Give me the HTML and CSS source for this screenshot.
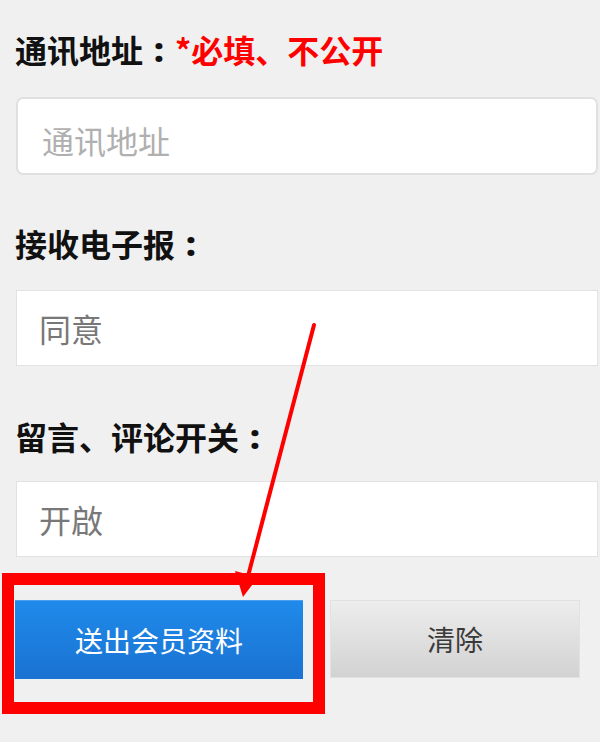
FILE: index.html
```html
<!DOCTYPE html>
<html lang="zh">
<head>
<meta charset="utf-8">
<title>会员资料</title>
<link rel="stylesheet" href="styles.css">
</head>
<body>
<div class="page">
  <form class="form">
    <div class="label label-first">通讯地址<span class="colon">:</span><span class="req">*必填、不公开</span></div>
    <input class="field field-round" type="text" placeholder="通讯地址">
    <div class="label label-second">接收电子报<span class="colon">:</span></div>
    <input class="field" type="text" value="同意">
    <div class="label label-third">留言、评论开关<span class="colon">:</span></div>
    <input class="field" type="text" value="开啟">
    <div class="actions">
      <button class="btn btn-primary" type="button">送出会员资料</button>
      <button class="btn btn-secondary" type="reset">清除</button>
    </div>
  </form>
  <div class="highlight"></div>
  <svg class="arrow" width="600" height="742" viewBox="0 0 600 742" aria-hidden="true">
    <line x1="314" y1="325" x2="247" y2="580" stroke="#ff0000" stroke-width="4" stroke-linecap="round"/>
    <polygon points="235,571 258,577 243,597" fill="#ff0000"/>
  </svg>
</div>
</body>
</html>
```

FILE: styles.css
```css
html, body {
  margin: 0;
  padding: 0;
  background: #f0f0f0;
}

.page {
  position: relative;
  width: 600px;
  height: 742px;
  overflow: hidden;
  font-family: "Noto Sans CJK SC", "Noto Sans", sans-serif;
}

.form {
  display: flex;
  flex-direction: column;
  padding: 25px 3px 0 15px;
}

.label {
  font-size: 32px;
  line-height: 48px;
  height: 48px;
  font-weight: 700;
  color: #111111;
  white-space: nowrap;
}

.colon {
  display: inline-block;
  width: 32px;
  text-align: center;
  font-family: "Noto Sans", "Liberation Sans", sans-serif;
  font-size: 34px;
  font-weight: 900;
  vertical-align: top;
}

.label-first { margin-bottom: 24px; }
.label-second { margin-top: 44px; margin-bottom: 23px; }
.label-third { margin-top: 46px; margin-bottom: 21px; }

.req {
  color: #ff0000;
  font-weight: 700;
}

.field {
  box-sizing: border-box;
  display: block;
  width: 582px;
  margin: 0 0 0 1px;
  height: 76px;
  padding: 0 22px;
  border: 1px solid #e2e2e2;
  background: #ffffff;
  font-family: "Noto Sans CJK SC", "Noto Sans", sans-serif;
  font-size: 32px;
  color: #787878;
  outline: none;
}

.field-round {
  height: 78px;
  border: 2px solid #e0e0e0;
  border-radius: 7px;
  padding-left: 24px;
  padding-top: 8px;
}

.field-round::placeholder {
  color: #b0b0b0;
}

.actions {
  display: flex;
  align-items: flex-start;
  gap: 27px;
  margin-top: 43px;
}

.btn {
  box-sizing: border-box;
  font-family: "Noto Sans CJK SC", "Noto Sans", sans-serif;
  font-size: 28px;
  padding: 0;
  cursor: pointer;
}

.btn-primary {
  width: 288px;
  height: 79px;
  border: none;
  border-top: 1px solid #4aa0ee;
  background: linear-gradient(#1f8aea, #1a72d2);
  color: #ffffff;
}

.btn-secondary {
  width: 250px;
  height: 78px;
  border: 1px solid #e2e2e2;
  background: linear-gradient(#ededed, #d2d2d2);
  color: #3a3a3a;
}

.highlight {
  position: absolute;
  left: 2px;
  top: 573px;
  width: 323px;
  height: 141px;
  box-sizing: border-box;
  border: 12px solid #ff0000;
  pointer-events: none;
}

.arrow {
  position: absolute;
  left: 0;
  top: 0;
  pointer-events: none;
}
```
